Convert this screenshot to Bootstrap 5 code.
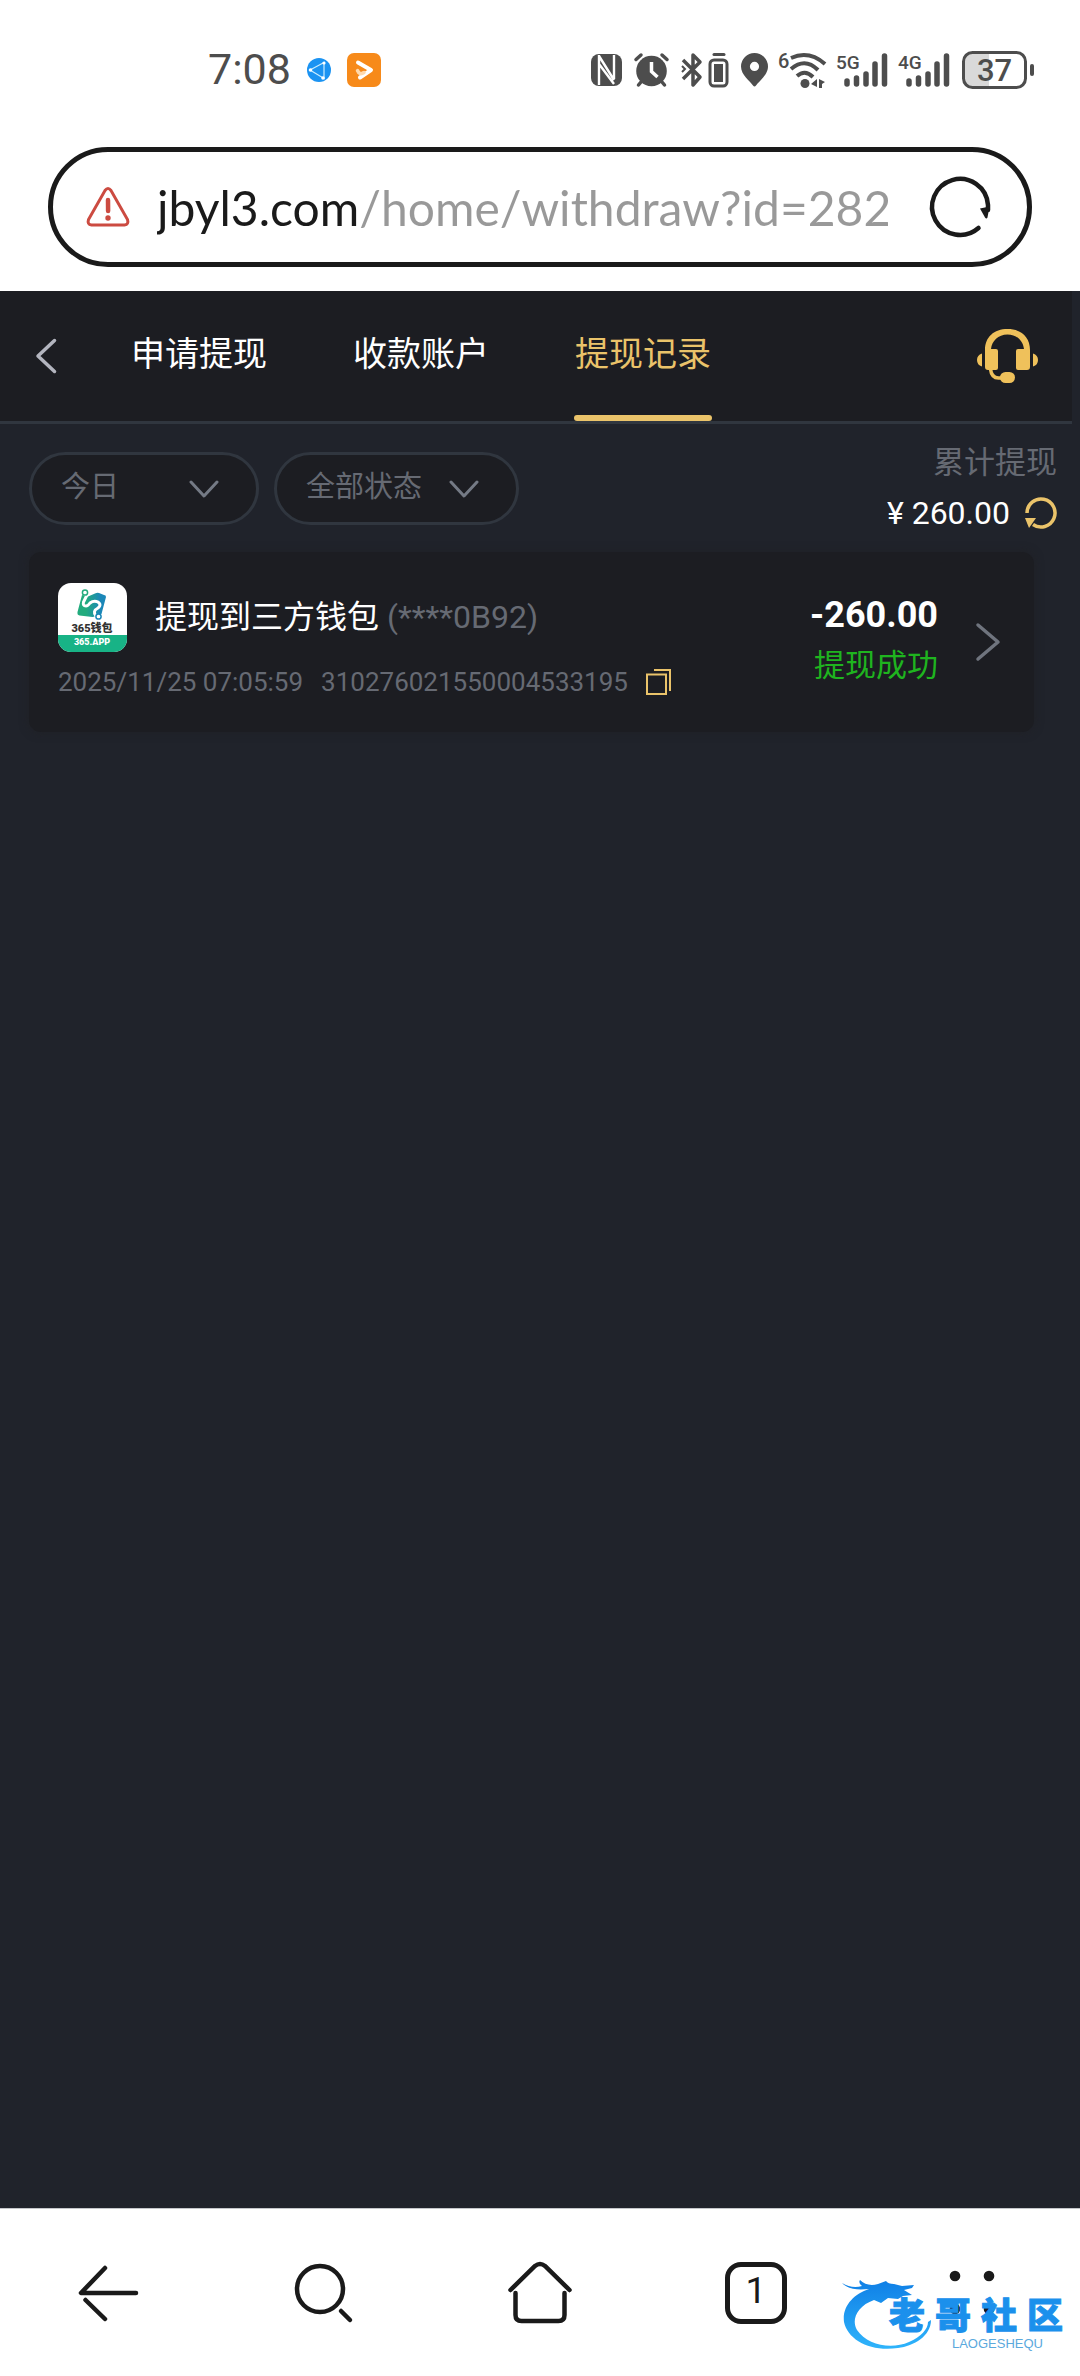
<!DOCTYPE html>
<html lang="zh-CN">
<head>
<meta charset="utf-8">
<meta name="viewport" content="width=device-width, initial-scale=1">
<title>提现记录</title>
<link href="https://cdn.jsdelivr.net/npm/bootstrap@5.3.0/dist/css/bootstrap.min.css" rel="stylesheet">
<style>
  :root { --ink:#1a1a1a; --gold:#eac36a; --panel:#1c1d22; --page:#20232b; --line:#30363f; --dim:#666a73; }
  body { font-family: Roboto, "Noto Sans CJK SC", sans-serif; background:#fff; }
  svg { display:block; flex:none; overflow:visible; }
  .status-bar { height:139px; padding:0 46px 0 208px; color:#4d4d4d; }
  .status-clock { font-size:43px; line-height:1; }
  .status-icons { gap:12px; }
  .address-bar { height:120px; margin:8px 48px 24px; padding:0 36px 0 33px; border:5px solid var(--ink); border-radius:60px; gap:27px; }
  .address-input { font-family: Lato, "Noto Sans CJK SC", sans-serif; font-size:48px; line-height:64px; min-width:0; height:72px; margin-right:16px;
    background:linear-gradient(90deg,#1a1a1a 204px,#999 204px); -webkit-background-clip:text; background-clip:text; -webkit-text-fill-color:transparent; color:#999; outline:0; }
  .app-page { background:var(--page); padding-right:8px; }
  .app-header { background:var(--panel); border-bottom:3px solid var(--line); height:133px; padding:0 34px 0 36px; }
  .app-tabs { margin-left:73px; gap:84px; }
  .app-tab { font-size:34px; color:#fff; text-decoration:none; padding:0 1px 4px; }
  .app-tab.active { color:var(--gold); }
  .app-tab.active::after { content:""; position:absolute; left:0; right:0; bottom:0; height:6px; border-radius:3px; background:var(--gold); }
  .filters { padding:16px 15px 0 29px; }
  .filter-row { gap:15px; padding-top:12px; }
  .filter-pill { height:73px; font-size:29px; color:var(--dim); background-color:var(--panel); border:3px solid var(--line); border-radius:37px; padding:0 0 1px 29px;
    background-image:url("data:image/svg+xml,%3Csvg xmlns='http://www.w3.org/2000/svg' viewBox='0 0 30 18'%3E%3Cpath d='M2 2l13 14L28 2' fill='none' stroke='%23747a85' stroke-width='3' stroke-linecap='round' stroke-linejoin='round'/%3E%3C/svg%3E"); background-size:30px 18px; background-position:right 37px center; }
  .pill-day { width:230px; }
  .pill-state { width:245px; }
  .total-label { font-size:31px; line-height:46px; color:var(--dim); }
  .total-sum { font-size:32px; line-height:54px; color:#fff; gap:15px; }
  .icon-btn { background:none; border:0; padding:0; }
  .record { margin:12px 38px 0 29px; height:180px; background:var(--panel); border-radius:12px; padding:0 34px 0 29px; box-shadow:0 0 10px rgba(32,32,34,.6); }
  .record-title { font-size:32px; color:#fff; gap:8px; padding-bottom:2px; }
  .record-title .acct { color:var(--dim); }
  .record-head { gap:28px; height:69px; }
  .record-meta { font-size:26px; line-height:38px; color:var(--dim); gap:18px; margin-top:11px; }
  .record-sum { font-size:36px; line-height:44px; font-weight:700; color:#fff; }
  .record-state { font-size:31px; line-height:50px; color:#1fb41f; margin-top:4px; }
  .record-side { gap:38px; }
  .browser-nav { height:168px; border-top:1px solid #c4c6ca; color:var(--ink); }
  .nav-cell { height:167px; color:var(--ink); }
  .tab-count { width:62px; height:62px; border:5px solid var(--ink); border-radius:16px; font-size:37px; line-height:48px; }
  .watermark { position:absolute; right:17px; bottom:24px; width:221px; height:72px; }
  .watermark svg { position:absolute; left:0; top:0; }
  .wm-name { position:absolute; right:0; top:17px; gap:10px; font:900 36px/32px "Noto Sans CJK SC", sans-serif; color:#1b90ec; -webkit-text-stroke:1px #1b90ec; }
  .wm-sub { position:absolute; right:20px; top:57px; font:13px/14px "Liberation Sans", sans-serif; color:#5ba9dd; }
</style>
</head>
<body>
<div class="d-flex flex-column min-vh-100">

  <div class="status-bar d-flex align-items-center">
    <span class="status-clock">7:08</span>
    <svg class="ms-3" width="24" height="24" viewBox="0 0 24 24"><circle cx="12" cy="12" r="12" fill="#1b93f2"/><path d="M3 12L17 4.500V20.500z" fill="none" stroke="#c8ecff" stroke-width="1.200"/><circle cx="3.500" cy="12" r="1.800" fill="#fff"/><circle cx="17" cy="5" r="1.600" fill="#fff"/><circle cx="16" cy="20" r="1.800" fill="#fff"/></svg>
    <svg class="ms-3" width="34" height="34" viewBox="0 0 34 34"><rect width="34" height="34" rx="7" fill="#f78a1a"/><path d="M11 9.500L24 17 13 24.500" fill="none" stroke="#fff" stroke-width="4" stroke-linecap="round" stroke-linejoin="round"/><path d="M10.500 17.500q2 5 6.500 2" fill="none" stroke="#ffd9ac" stroke-width="3.500" stroke-linecap="round"/></svg>
    <div class="status-icons d-flex align-items-center ms-auto">
      <svg width="31" height="32" viewBox="0 0 31 32"><rect width="31" height="32" rx="8" fill="#4d4d4d"/><path d="M8 1v30M8 2l15 24M8 10l15 20M23 1v24" fill="none" stroke="#fff" stroke-width="2.400"/></svg>
      <svg width="35" height="34" viewBox="0 0 35 34"><g stroke="#4d4d4d" stroke-width="3.500" stroke-linecap="round"><path d="M2 6.500L7 2M33 6.500L28 2M7 29l-2.500 3M28 29l2.500 3"/></g><circle cx="17.500" cy="18" r="15.300" fill="#4d4d4d"/><path d="M17.500 9v9.500l6 5.500" fill="none" stroke="#fff" stroke-width="3.500"/></svg>
      <svg width="48" height="36" viewBox="0 0 48 36"><g fill="none" stroke="#4d4d4d"><path d="M2 8l17 17-7 8V3l7 7L2 27" stroke-width="3.500" stroke-linejoin="round"/><path d="M1 14l3 3-3 3" stroke-width="2"/><rect x="29" y="8" width="17" height="26" rx="4" stroke-width="3"/><path d="M33 2.500h10" stroke-width="3" stroke-linecap="round"/></g><path d="M33 12h9v18h-9z" fill="#4d4d4d"/></svg>
      <svg width="27" height="34" viewBox="0 0 27 34"><path fill-rule="evenodd" fill="#4d4d4d" d="M13.500 0A13.500 13.500 0 0 1 27 13.500C27 22 18 28 15 32.500q-1.500 2-3 0C9 28 0 22 0 13.500A13.500 13.500 0 0 1 13.500 0zm0 8.800a4.600 4.600 0 1 0 0 9.200 4.600 4.600 0 0 0 0-9.200z"/></svg>
      <svg width="46" height="36" viewBox="0 0 46 36"><g fill="none" stroke="#4d4d4d" stroke-width="4"><path d="M11 6Q29-2 45 12M11 17q14-12 27 1M17 24q8-7 16 1"/></g><circle cx="25" cy="31.500" r="4.500" fill="#4d4d4d"/><path d="M31 32l6-5v8zM39 27l6 3-3 2v4h-3z" fill="#4d4d4d"/><text x="-2" y="16" font-family="Roboto" font-weight="500" font-size="20" fill="#4d4d4d">6</text></svg>
      <svg width="50" height="36" viewBox="0 0 50 36"><g stroke="#4d4d4d" stroke-width="5.500" stroke-linecap="round"><path d="M9 29v3M18.500 26v6M28 22v10M37 12v20M46.500 4v28"/></g><text x="-2" y="17" font-family="Roboto" font-weight="500" font-size="19" fill="#4d4d4d">5G</text></svg>
      <svg width="50" height="36" viewBox="0 0 50 36"><g stroke="#4d4d4d" stroke-width="5.500" stroke-linecap="round"><path d="M9 29v3M18.500 26v6M28 22v10M37 12v20M46.500 4v28"/></g><text x="-2" y="17" font-family="Roboto" font-weight="500" font-size="19" fill="#4d4d4d">4G</text></svg>
      <svg width="72" height="38" viewBox="0 0 72 38"><path d="M10 1.500h17v35H10a8 8 0 0 1-8-8v-19a8 8 0 0 1 8-8z" fill="#d9d9d9"/><rect x="1.500" y="1.500" width="62" height="35" rx="9" fill="none" stroke="#4d4d4d" stroke-width="3"/><path d="M70 15v8" stroke="#4d4d4d" stroke-width="4" stroke-linecap="round"/><text x="32.500" y="30" text-anchor="middle" font-family="Roboto" font-weight="500" font-size="31" fill="#4d4d4d">37</text></svg>
    </div>
  </div>

  <form class="address-bar d-flex align-items-center">
    <svg width="44" height="40" viewBox="0 0 44 40"><path d="M19 3.500q3-4 6 0l16.500 29q1.500 5-3 5.500h-33q-4.500-.5-3-5.500z" fill="none" stroke="#cc4b41" stroke-width="3"/><path d="M22 13l.1 11" stroke="#cc4b41" stroke-width="4.500" stroke-linecap="round"/><circle cx="22" cy="31" r="2.700" fill="#cc4b41"/></svg>
    <input class="address-input flex-grow-1 border-0 p-0" type="text" aria-label="网址" value="jbyl3.com/home/withdraw?id=282">
    <button class="icon-btn" type="button" aria-label="刷新"><svg width="60" height="60" viewBox="0 0 60 60"><path d="M47.500 51A28 28 0 1 1 57 28v5" fill="none" stroke="#1a1a1a" stroke-width="4.500" stroke-linecap="round"/><path d="M49 31.500l9.500-2-2 11q-1 2-2.500 0z" fill="#1a1a1a"/></svg></button>
  </form>

  <main class="app-page flex-grow-1">
    <header class="app-header d-flex align-items-center">
      <a href="#" aria-label="返回"><svg width="21" height="36" viewBox="0 0 21 36"><path d="M18.500 2.500L2 18l16.500 15.500" fill="none" stroke="#b3b5bf" stroke-width="3.500" stroke-linecap="round" stroke-linejoin="round"/></svg></a>
      <nav class="app-tabs d-flex align-self-stretch">
        <a class="app-tab position-relative d-flex align-items-center" href="#">申请提现</a>
        <a class="app-tab position-relative d-flex align-items-center" href="#">收款账户</a>
        <a class="app-tab active position-relative d-flex align-items-center" href="#" aria-current="page">提现记录</a>
      </nav>
      <a class="ms-auto" href="#" aria-label="客服"><svg width="61" height="54" viewBox="0 0 61 54"><g fill="#efc15b"><path d="M5 24.500v13Q0 36 0 31t5-6.500zM56 24.500v13q5-1.500 5-6.500t-5-6.500z"/><path d="M8 21C8 8 17 0 30.500 0S53 8 53 21v17q0 3-3 3H41q-2 0-2-2V22q0-2 2-2h6C46 12 40 5.500 30.500 5.500S15 12 14 20h5q2 0 2 2v17q0 2-2 2h-8q-3 0-3-3z"/><rect x="23" y="43" width="15" height="11" rx="5.500"/></g><path d="M13.500 40q1 9 8 9h4" fill="none" stroke="#efc15b" stroke-width="3.500"/></svg></a>
    </header>

    <section class="filters d-flex justify-content-between align-items-start">
      <div class="filter-row d-flex">
        <select class="form-select filter-pill pill-day" aria-label="日期"><option>今日</option></select>
        <select class="form-select filter-pill pill-state" aria-label="状态"><option>全部状态</option></select>
      </div>
      <div class="text-end">
        <div class="total-label">累计提现</div>
        <div class="total-sum d-flex align-items-center"><span>¥ 260.00</span>
          <button class="icon-btn" type="button" aria-label="刷新金额"><svg width="32" height="32" viewBox="0 0 32 32"><path d="M2 16a14 14 0 1 1 6 11.500" fill="none" stroke="#eac36a" stroke-width="3.500"/><path d="M0 21h11L4 31z" fill="#eac36a"/></svg></button>
        </div>
      </div>
    </section>

    <article class="record d-flex align-items-center">
      <div class="flex-grow-1">
        <div class="record-head d-flex align-items-center">
          <svg width="69" height="69" viewBox="0 0 69 69"><defs><linearGradient id="walletMark"><stop offset=".3" stop-color="#22ab7d"/><stop offset=".8" stop-color="#1b87b8"/></linearGradient><clipPath id="walletBox"><rect width="69" height="69" rx="13"/></clipPath></defs><g clip-path="url(#walletBox)"><path fill="#fff" d="M0 0h69v69H0z"/><path fill="#18b386" d="M0 52h69v17H0z"/></g><path d="M24 12l-4.500 17q-.5 3 2 3.500l13 1.500q3 0 4-3l5 0 4.500-17q0-2-2-2l-5-2q-2-.5-4 .5l-7 3z" fill="url(#walletMark)"/><path d="M29.500 11l-4 8q-1 4 2.500 4 2 0 4-3 4-3 8-1 4 3 0 6-6 3-2 8" fill="none" stroke="#fff" stroke-width="3"/><circle cx="27" cy="9.500" r="2.600" fill="#fff" stroke="#22ab7d" stroke-width="1.500"/><circle cx="40.500" cy="33.500" r="2.600" fill="#fff" stroke="#1b87b8" stroke-width="1.500"/><text x="34" y="48.500" text-anchor="middle" font-family="Roboto, Noto Sans CJK SC" font-weight="900" font-size="11" fill="#333">365钱包</text><text x="34" y="62" text-anchor="middle" font-family="Roboto" font-weight="900" font-size="9" fill="#fff">365.APP</text></svg>
          <div class="record-title d-flex align-items-center">提现到三方钱包<span class="acct">(****0B92)</span></div>
        </div>
        <div class="record-meta d-flex align-items-center"><span>2025/11/25 07:05:59</span><span>310276021550004533195</span>
          <button class="icon-btn" type="button" aria-label="复制单号"><svg width="25" height="26" viewBox="0 0 25 26"><path d="M1 5.500h19V25H1zM8 1h16v21" fill="none" stroke="#eac36a" stroke-width="2"/></svg></button>
        </div>
      </div>
      <div class="record-side d-flex align-items-center">
        <div class="text-end"><div class="record-sum">-260.00</div><div class="record-state">提现成功</div></div>
        <a href="#" aria-label="查看详情"><svg width="24" height="38" viewBox="0 0 24 38"><path d="M2 2l20 17L2 36" fill="none" stroke="#6f747e" stroke-width="3.500" stroke-linecap="round" stroke-linejoin="round"/></svg></a>
      </div>
    </article>
  </main>

  <nav class="browser-nav position-relative row g-0 row-cols-5 bg-white">
    <div class="col"><button class="icon-btn nav-cell w-100 d-flex align-items-center justify-content-center" aria-label="后退"><svg width="60" height="56" viewBox="0 0 60 56"><g fill="none" stroke="#1a1a1a" stroke-width="4.500" stroke-linecap="round"><path d="M27 3L3 28h55M7.500 35L27 54" stroke-linejoin="round"/></g></svg></button></div>
    <div class="col"><button class="icon-btn nav-cell w-100 d-flex align-items-center justify-content-center" aria-label="搜索"><svg width="58" height="58" viewBox="0 0 58 58"><g fill="none" stroke="#1a1a1a" stroke-width="4.500" stroke-linecap="round"><circle cx="25" cy="25" r="23"/><path d="M46 47l9 9"/></g></svg></button></div>
    <div class="col"><button class="icon-btn nav-cell w-100 d-flex align-items-center justify-content-center" aria-label="主页"><svg width="64" height="62" viewBox="0 0 64 62"><g fill="none" stroke="#1a1a1a" stroke-width="4.500" stroke-linecap="round"><path d="M2.500 28L27 4q5-4 10 0l24.500 24"/><path d="M7.500 31v22q0 6 6 6h37q6 0 6-6V31"/></g></svg></button></div>
    <div class="col"><button class="icon-btn nav-cell w-100 d-flex align-items-center justify-content-center" aria-label="标签页"><span class="tab-count text-center">1</span></button></div>
    <div class="col"><button class="icon-btn nav-cell w-100 d-flex align-items-center justify-content-center" aria-label="菜单"><svg width="46" height="46" viewBox="0 0 46 46"><g fill="#1a1a1a"><circle cx="6" cy="6" r="5.300"/><circle cx="40" cy="6" r="5.300"/><circle cx="6" cy="39" r="5.300"/><circle cx="40" cy="39" r="5.300"/></g></svg></button></div>
    <div class="watermark">
      <svg width="92" height="72" viewBox="0 0 92 72"><defs><linearGradient id="dragonBlue" x2="0" y2="1"><stop stop-color="#0f7fe6"/><stop offset="1" stop-color="#2fb4fb"/></linearGradient></defs><path fill="url(#dragonBlue)" d="M0 3q10 6 20 3-4-3-2-6 7 7 18 4l8-3q2 3 8 3l8 2 12-1-2 3-8 2 8 5-9 1-5 3-10-1-7 5-7-3C15 26 9 40 15 50c10 15 34 20 52 12 12-5 19-13 19-20l3-2C89 56 72 66 56 68 28 72 6 60 2 42 0 26 12 14 27 9 17 10 7 10 0 3z"/></svg>
      <div class="wm-name d-flex"><span>老</span><span>哥</span><span>社</span><span>区</span></div>
      <div class="wm-sub">LAOGESHEQU</div>
    </div>
  </nav>
</div>
<script src="https://cdn.jsdelivr.net/npm/bootstrap@5.3.0/dist/js/bootstrap.bundle.min.js"></script>
</body>
</html>
